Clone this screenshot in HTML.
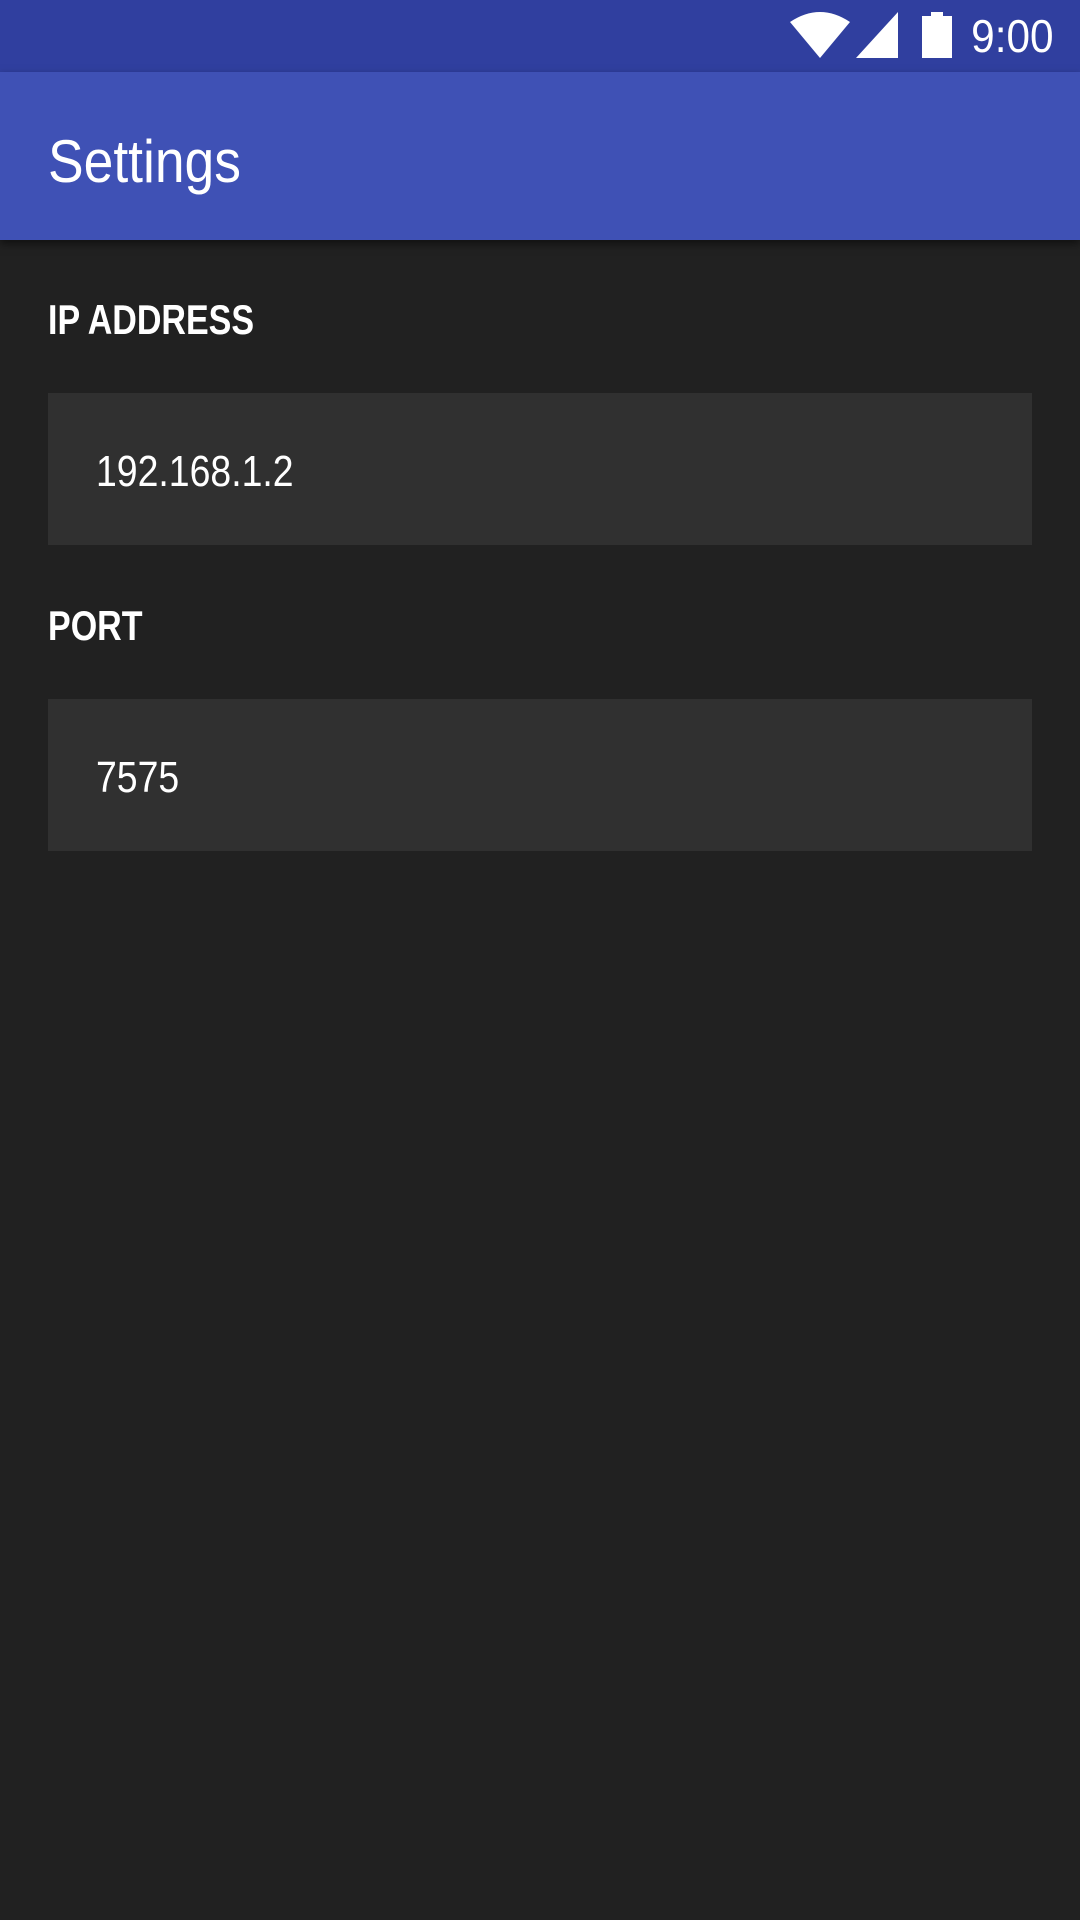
<!DOCTYPE html>
<html><head><meta charset="utf-8"><style>
html,body{margin:0;padding:0;width:1080px;height:1920px;background:#212121;overflow:hidden;font-family:"Liberation Sans",sans-serif;color:#fff}
.status{position:absolute;top:0;left:0;width:1080px;height:72px;background:#303F9F}
.bar{position:absolute;top:72px;left:0;width:1080px;height:168px;background:#3F51B5;box-shadow:0 4px 8px rgba(0,0,0,.5)}
.title{position:absolute;left:48px;top:54px;font-size:60px;line-height:72px;transform:scaleX(.89);transform-origin:left}
.label{position:absolute;left:48px;font-size:42px;font-weight:bold;transform:scaleX(.81);transform-origin:left}
.box{position:absolute;left:48px;width:984px;height:152px;background:#303030}
.val{position:absolute;left:48px;top:3px;line-height:152px;font-size:44px;transform:scaleX(.85);transform-origin:left}
.time{position:absolute;right:26px;top:10px;font-size:46px;line-height:52px;transform:scaleX(.92);transform-origin:right}
</style></head><body>
<div class="status">
<svg style="position:absolute;left:790px;top:12px" width="60" height="46" viewBox="0 0 60 46"><path d="M0 10 Q30 -10 60 10 L30 46 Z" fill="#fff"/></svg>
<svg style="position:absolute;left:856px;top:12px" width="42" height="46" viewBox="0 0 42 46"><path d="M42 0 V46 H0 Z" fill="#fff"/></svg>
<svg style="position:absolute;left:922px;top:12px" width="30" height="46" viewBox="0 0 30 46"><path d="M9 0 H21 V4 H30 V46 H0 V4 H9 Z" fill="#fff"/></svg>
<div class="time">9:00</div>
</div>
<div class="bar"><div class="title">Settings</div></div>
<div class="label" style="top:296px">IP ADDRESS</div>
<div class="box" style="top:393px"><div class="val">192.168.1.2</div></div>
<div class="label" style="top:602px">PORT</div>
<div class="box" style="top:699px"><div class="val">7575</div></div>
</body></html>
